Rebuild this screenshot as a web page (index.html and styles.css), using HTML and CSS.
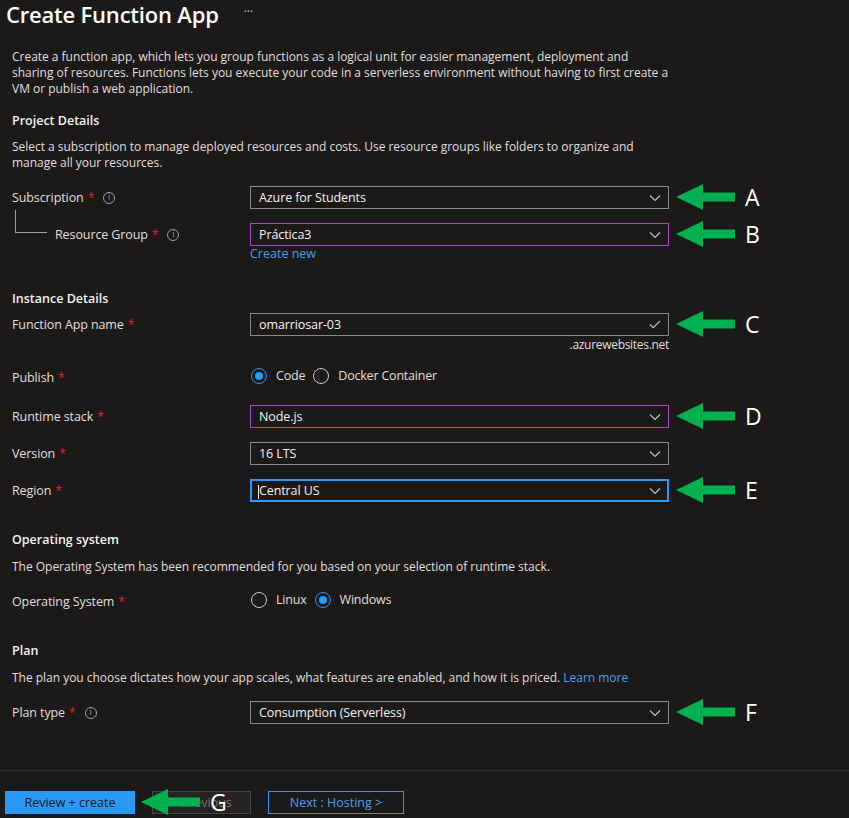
FILE: index.html
```html
<!DOCTYPE html>
<html lang="en">
<head>
<meta charset="utf-8">
<title>Create Function App</title>
<link rel="stylesheet" href="styles.css">
</head>
<body>
<div class="page">
  <header class="title-bar">
    <h1>Create Function App</h1>
    <span class="more">···</span>
  </header>

  <p class="text intro">Create a function app, which lets you group functions as a logical unit for easier management, deployment and<br>sharing of resources. Functions lets you execute your code in a serverless environment without having to first create a<br>VM or publish a web application.</p>

  <h2 class="section first">Project Details</h2>
  <p class="text sub">Select a subscription to manage deployed resources and costs. Use resource groups like folders to organize and<br>manage all your resources.</p>

  <div class="row r-sub">
    <label class="lbl">Subscription <span class="req">*</span> <span class="info">i</span></label>
    <div class="ctl">
      <div class="select"><span>Azure for Students</span><svg class="chev" viewBox="0 0 12 8"><path d="M1 1.5 L6 6.5 L11 1.5"/></svg></div>
    </div>
    <div class="anno"><svg class="arrow" viewBox="0 0 59 26"><polygon points="0,13 27,0 27,8.5 59,8.5 59,17.5 27,17.5 27,26"/></svg><span>A</span></div>
  </div>

  <div class="row r-rg">
    <label class="lbl child">Resource Group <span class="req">*</span> <span class="info">i</span></label>
    <div class="ctl">
      <div class="select purple"><span>Práctica3</span><svg class="chev" viewBox="0 0 12 8"><path d="M1 1.5 L6 6.5 L11 1.5"/></svg></div>
      <a class="link create-new">Create new</a>
    </div>
    <div class="anno"><svg class="arrow" viewBox="0 0 59 26"><polygon points="0,13 27,0 27,8.5 59,8.5 59,17.5 27,17.5 27,26"/></svg><span>B</span></div>
  </div>

  <h2 class="section inst">Instance Details</h2>

  <div class="row r-name">
    <label class="lbl">Function App name <span class="req">*</span></label>
    <div class="ctl">
      <div class="select"><span>omarriosar-03</span><svg class="check" viewBox="0 0 12 9"><path d="M1 4.5 L4.2 7.7 L11 1"/></svg></div>
      <div class="suffix">.azurewebsites.net</div>
    </div>
    <div class="anno"><svg class="arrow" viewBox="0 0 59 26"><polygon points="0,13 27,0 27,8.5 59,8.5 59,17.5 27,17.5 27,26"/></svg><span>C</span></div>
  </div>

  <div class="row r-pub">
    <label class="lbl">Publish <span class="req">*</span></label>
    <div class="ctl radios">
      <span class="radio on"></span><span class="rtext">Code</span>
      <span class="radio"></span><span class="rtext">Docker Container</span>
    </div>
  </div>

  <div class="row r-run">
    <label class="lbl">Runtime stack <span class="req">*</span></label>
    <div class="ctl">
      <div class="select purple"><span>Node.js</span><svg class="chev" viewBox="0 0 12 8"><path d="M1 1.5 L6 6.5 L11 1.5"/></svg></div>
    </div>
    <div class="anno"><svg class="arrow" viewBox="0 0 59 26"><polygon points="0,13 27,0 27,8.5 59,8.5 59,17.5 27,17.5 27,26"/></svg><span>D</span></div>
  </div>

  <div class="row r-ver">
    <label class="lbl">Version <span class="req">*</span></label>
    <div class="ctl">
      <div class="select"><span>16 LTS</span><svg class="chev" viewBox="0 0 12 8"><path d="M1 1.5 L6 6.5 L11 1.5"/></svg></div>
    </div>
  </div>

  <div class="row r-reg">
    <label class="lbl">Region <span class="req">*</span></label>
    <div class="ctl">
      <div class="select focus"><span><i class="caret"></i>Central US</span><svg class="chev" viewBox="0 0 12 8"><path d="M1 1.5 L6 6.5 L11 1.5"/></svg></div>
    </div>
    <div class="anno"><svg class="arrow" viewBox="0 0 59 26"><polygon points="0,13 27,0 27,8.5 59,8.5 59,17.5 27,17.5 27,26"/></svg><span>E</span></div>
  </div>

  <h2 class="section os">Operating system</h2>
  <p class="text sub">The Operating System has been recommended for you based on your selection of runtime stack.</p>

  <div class="row r-os">
    <label class="lbl">Operating System <span class="req">*</span></label>
    <div class="ctl radios">
      <span class="radio"></span><span class="rtext">Linux</span>
      <span class="radio on"></span><span class="rtext">Windows</span>
    </div>
  </div>

  <h2 class="section plan">Plan</h2>
  <p class="text sub">The plan you choose dictates how your app scales, what features are enabled, and how it is priced. <a class="link">Learn more</a></p>

  <div class="row r-plan">
    <label class="lbl">Plan type <span class="req">*</span> <span class="info">i</span></label>
    <div class="ctl">
      <div class="select"><span>Consumption (Serverless)</span><svg class="chev" viewBox="0 0 12 8"><path d="M1 1.5 L6 6.5 L11 1.5"/></svg></div>
    </div>
    <div class="anno"><svg class="arrow" viewBox="0 0 59 26"><polygon points="0,13 27,0 27,8.5 59,8.5 59,17.5 27,17.5 27,26"/></svg><span>F</span></div>
  </div>
</div>

<footer class="footer">
  <button class="btn primary">Review + create</button>
  <button class="btn disabled">&lt; Previous</button>
  <button class="btn outline">Next : Hosting &gt;</button>
  <div class="anno anno-g"><svg class="arrow" viewBox="0 0 59 26"><polygon points="0,13 27,0 27,8.5 59,8.5 59,17.5 27,17.5 27,26"/></svg><span>G</span></div>
</footer>
</body>
</html>
```

FILE: styles.css
```css
html, body {
  margin: 0;
  padding: 0;
  background: #1b1a19;
}
body {
  width: 849px;
  height: 818px;
  overflow: hidden;
  font-family: "Open Sans", "Noto Sans", sans-serif;
  font-size: 12px;
  color: #e1dfdd;
}
.page {
  padding: 0 12px;
  height: 770px;
  box-sizing: border-box;
}
.title-bar {
  display: flex;
  align-items: center;
  height: 28px;
  margin-left: -6px;
}
.title-bar h1 {
  margin: 0;
  font-size: 22px;
  font-weight: 600;
  color: #ffffff;
  line-height: 28px;
  letter-spacing: -0.2px;
}
.more {
  margin-left: 25px;
  color: #c8c6c4;
  font-size: 12px;
  line-height: 1;
  margin-top: -4px;
}
.text {
  margin: 0;
  line-height: 16px;
  color: #e1dfdd;
  font-size: 12px;
  letter-spacing: -0.02px;
  white-space: nowrap;
}
.intro { margin-top: 21px; }
.section {
  margin: 0;
  font-size: 12.5px;
  font-weight: 600;
  line-height: 16px;
  color: #f3f2f1;
}
.section.first { margin-top: 16px; }
.section.inst { margin-top: 29px; }
.section.os { margin-top: 30px; }
.section.plan { margin-top: 32px; }
.sub { margin-top: 10px; }
.section.os + .sub, .section.plan + .sub { margin-top: 11px; }

.row {
  position: relative;
  display: grid;
  grid-template-columns: 238px 419px;
  align-items: start;
}
.lbl {
  display: flex;
  align-items: center;
  height: 23px;
  font-size: 12.5px;
  color: #e1dfdd;
  white-space: nowrap;
  letter-spacing: -0.1px;
}
.req {
  color: #e8202c;
  margin-left: 4px;
  font-size: 12px;
}
.info {
  display: inline-flex;
  align-items: center;
  justify-content: center;
  width: 10px;
  height: 10px;
  border: 1px solid #a19f9d;
  border-radius: 50%;
  font-size: 8px;
  line-height: 1;
  color: #a19f9d;
  margin-left: 9px;
  font-family: "DejaVu Sans", sans-serif;
}
.lbl.child {
  position: relative;
  padding-left: 43px;
}
.lbl.child::before {
  content: "";
  position: absolute;
  left: 3px;
  top: -13px;
  width: 31px;
  height: 22px;
  border-left: 1px solid #a19f9d;
  border-bottom: 1px solid #a19f9d;
}
.select {
  display: flex;
  align-items: center;
  justify-content: space-between;
  height: 23px;
  box-sizing: border-box;
  border: 1px solid #8a8886;
  padding: 0 7px 0 8px;
  color: #f3f2f1;
  font-size: 12.5px;
  letter-spacing: -0.1px;
}
.select.purple { border-color: #b146c2; }
.select.focus { border: 1px solid #2899f5; box-shadow: inset 0 0 0 1px #2899f5; }
.chev {
  width: 12px;
  height: 8px;
  fill: none;
  stroke: #c8c6c4;
  stroke-width: 1.1;
}
.check {
  width: 12px;
  height: 9px;
  fill: none;
  stroke: #c8c6c4;
  stroke-width: 1.1;
}
.caret {
  display: inline-block;
  width: 1px;
  height: 14px;
  background: #f3f2f1;
  vertical-align: middle;
  margin-left: -1px;
}
.link {
  color: #4a9fe8;
  text-decoration: none;
  cursor: pointer;
}
.create-new {
  display: block;
  line-height: 16px;
  font-size: 12.5px;
}
.suffix {
  text-align: right;
  line-height: 16px;
  font-size: 12px;
  letter-spacing: -0.3px;
  color: #e1dfdd;
  margin-top: 1px;
}
.radios {
  display: flex;
  align-items: center;
  height: 23px;
  padding-left: 1px;
}
.radio {
  width: 14px;
  height: 14px;
  border: 1px solid #c8c6c4;
  border-radius: 50%;
  box-sizing: content-box;
  position: relative;
}
.radio.on { border-color: #2899f5; }
.radio.on::after {
  content: "";
  position: absolute;
  left: 3px;
  top: 3px;
  width: 8px;
  height: 8px;
  border-radius: 50%;
  background: #2899f5;
}
.rtext {
  margin-left: 9px;
  margin-right: 8px;
  font-size: 12.5px;
  letter-spacing: -0.2px;
  color: #e1dfdd;
}

.r-sub { margin-top: 15px; }
.r-rg { margin-top: 14px; }
.r-name { margin-top: 6px; }
.r-pub { margin-top: 11px; }
.r-run { margin-top: 18px; }
.r-ver { margin-top: 14px; }
.r-reg { margin-top: 14px; }
.r-os { margin-top: 13px; }
.r-plan { margin-top: 15px; }
.r-pub .lbl, .r-os .lbl { padding-top: 3px; box-sizing: border-box; }

.anno {
  position: absolute;
  left: 664px;
  top: -2px;
  display: flex;
  align-items: center;
  height: 26px;
}
.arrow {
  width: 59px;
  height: 26px;
  fill: #00b050;
}
.anno span {
  margin-left: 10px;
  font-size: 23px;
  color: #ffffff;
  line-height: 1;
  font-family: "Open Sans", sans-serif;
}

.footer {
  position: relative;
  border-top: 1px solid #323130;
  padding: 20px 5px 0;
  display: flex;
  gap: 17px;
  height: 48px;
  box-sizing: border-box;
}
.btn {
  height: 23px;
  padding: 0;
  font-family: "Open Sans", "Noto Sans", sans-serif;
  font-size: 12.5px;
  box-sizing: border-box;
  border: 1px solid transparent;
  background: transparent;
}
.btn.primary {
  width: 130px;
  background: #2899f5;
  color: #1b1a19;
  border-color: #2899f5;
}
.btn.disabled {
  width: 99px;
  border-color: #484644;
  background: #252423;
  color: #797775;
}
.btn.outline {
  width: 136px;
  border-color: #2899f5;
  color: #4a9fe8;
}
.anno-g {
  left: 141px;
  top: 18px;
}
.anno-g span { margin-left: 10px; }
```
